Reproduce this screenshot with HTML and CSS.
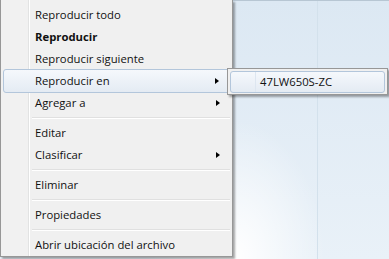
FILE: index.html
```html
<!DOCTYPE html>
<html lang="es">
<head>
    <meta charset="UTF-8">
    <title>Menú contextual</title>
    <link rel="stylesheet" href="styles.css">
</head>
<body>
    <div class="desktop">
        <div class="menu">
            <div class="menu-item">Reproducir todo</div>
            <div class="menu-item default">Reproducir</div>
            <div class="menu-item">Reproducir siguiente</div>
            <div class="menu-item active has-sub">Reproducir en</div>
            <div class="menu-item has-sub">Agregar a</div>
            <div class="menu-sep"></div>
            <div class="menu-item">Editar</div>
            <div class="menu-item has-sub">Clasificar</div>
            <div class="menu-sep"></div>
            <div class="menu-item">Eliminar</div>
            <div class="menu-sep"></div>
            <div class="menu-item">Propiedades</div>
            <div class="menu-sep"></div>
            <div class="menu-item">Abrir ubicación del archivo</div>
        </div>

        <div class="submenu">
            <div class="menu-item active">47LW650S-ZC</div>
        </div>
    </div>
</body>
</html>
```

FILE: styles.css
```css
* {
    margin: 0;
    padding: 0;
    box-sizing: border-box;
}

body {
    font-family: "Open Sans", "Noto Sans", sans-serif;
    font-size: 11.3px;
    color: #111;
    background: #e3edf6;
    overflow: hidden;
}

.desktop {
    position: relative;
    width: 389px;
    height: 259px;
    border-top: 1px solid #b7c6d3;
    background:
        linear-gradient(to right, transparent 317px, #d3e1ec 317px, #d3e1ec 318px, transparent 318px),
        radial-gradient(ellipse 90px 140px at 235px 259px, #ffffff 0%, rgba(255,255,255,0) 100%),
        linear-gradient(to bottom, #dce8f3, #e9f1f8);
}

.menu {
    width: 233px;
    margin-top: -1px;
    padding: 4px 2px 0 2px;
    border: 1px solid #979797;
    border-top: none;
    background: linear-gradient(to right, #f1f1f1 27px, #e2e3e3 27px, #e2e3e3 28px, #ffffff 28px, #ffffff 29px, #f0f0f0 29px);
    box-shadow: 2px 2px 2px rgba(0,0,0,0.35);
}

.menu-item {
    position: relative;
    height: 22px;
    line-height: 22px;
    padding-left: 32px;
    white-space: nowrap;
}

.menu-item.default {
    font-weight: bold;
}

.menu-item.active {
    height: 24px;
    line-height: 22px;
    margin: -1px 0;
    padding-left: 31px;
    border: 1px solid #b3c6db;
    border-radius: 3px;
    background: linear-gradient(to bottom, #f5f8fc, #e4ebf3);
}

.menu-item.has-sub::after {
    content: "";
    position: absolute;
    right: 10px;
    top: 50%;
    margin-top: -3.5px;
    border-left: 4px solid #000;
    border-top: 3.5px solid transparent;
    border-bottom: 3.5px solid transparent;
}

.menu-sep {
    height: 8px;
    margin-left: 29px;
    background: linear-gradient(to bottom, transparent 3px, #e0e0e0 3px, #e0e0e0 4px, #ffffff 4px, #ffffff 5px, transparent 5px);
}

.submenu {
    position: absolute;
    left: 227px;
    top: 67px;
    width: 161px;
    padding: 2px 2px 1px 2px;
    border: 1px solid #979797;
    background: #f0f0f0;
    box-shadow: 2px 2px 2px rgba(0,0,0,0.35);
}

.submenu .menu-item.active {
    height: 22px;
    line-height: 20px;
    margin: 0;
    padding-left: 29px;
    background:
        linear-gradient(to right, transparent 24px, #dde6f0 24px, #dde6f0 25px, transparent 25px),
        linear-gradient(to bottom, #f5f8fc, #e4ebf3);
}
```
